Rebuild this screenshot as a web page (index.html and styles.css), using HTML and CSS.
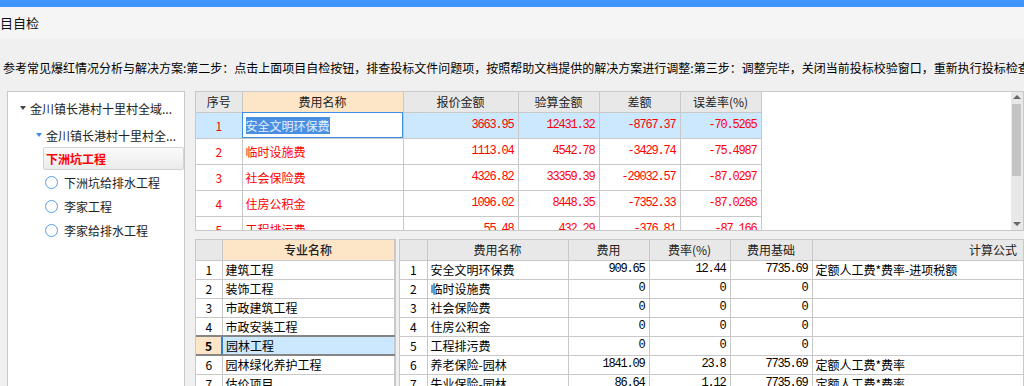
FILE: index.html
```html
<!DOCTYPE html>
<html lang="zh-CN">
  <head>
    <meta charset="UTF-8" />
    <meta name="viewport" content="width=device-width, initial-scale=1.0" />
    <title>项目自检</title>
    <link rel="stylesheet" href="styles.css">
  </head>
  <body>
    <div class="topbar"></div>
    <div class="titlebar">目自检</div>
    <div class="tip">参考常见爆红情况分析与解决方案:第二步：点击上面项目自检按钮，排查投标文件问题项，按照帮助文档提供的解决方案进行调整:第三步：调整完毕，关闭当前投标校验窗口，重新执行投标检查</div>

    <div class="main">
      <div class="tree">
        <div class="node level1"><span class="caret"></span>金川镇长港村十里村全域...</div>
        <div class="node level2"><span class="caret blue"></span>金川镇长港村十里村全...</div>
        <div class="node current">下洲坑工程</div>
        <div class="node leaf"><span class="ring"></span>下洲坑给排水工程</div>
        <div class="node leaf"><span class="ring"></span>李家工程</div>
        <div class="node leaf"><span class="ring"></span>李家给排水工程</div>
      </div>

      <div class="right">
        <div class="upper">
          <div class="grid-wrap">
            <table class="grid check">
              <colgroup>
                <col style="width:46px" /><col style="width:161px" /><col style="width:115px" />
                <col style="width:81px" /><col style="width:81px" /><col style="width:81px" />
              </colgroup>
              <tr>
                <th>序号</th><th class="sorted">费用名称</th><th>报价金额</th>
                <th>验算金额</th><th>差额</th><th>误差率(%)</th>
              </tr>
              <tr class="selected">
                <td class="no">1</td><td class="editing"><span class="hl">安全文明环保费</span></td>
                <td class="num">3663.95</td><td class="num">12431.32</td><td class="num">-8767.37</td><td class="num">-70.5265</td>
              </tr>
              <tr>
                <td class="no">2</td><td>临时设施费</td>
                <td class="num">1113.04</td><td class="num">4542.78</td><td class="num">-3429.74</td><td class="num">-75.4987</td>
              </tr>
              <tr>
                <td class="no">3</td><td>社会保险费</td>
                <td class="num">4326.82</td><td class="num">33359.39</td><td class="num">-29032.57</td><td class="num">-87.0297</td>
              </tr>
              <tr>
                <td class="no">4</td><td>住房公积金</td>
                <td class="num">1096.02</td><td class="num">8448.35</td><td class="num">-7352.33</td><td class="num">-87.0268</td>
              </tr>
              <tr>
                <td class="no">5</td><td>工程排污费</td>
                <td class="num">55.48</td><td class="num">432.29</td><td class="num">-376.81</td><td class="num">-87.166</td>
              </tr>
            </table>
          </div>
          <div class="vscroll">
            <span class="arrow up"></span>
            <span class="thumb"></span>
            <span class="arrow down"></span>
          </div>
        </div>

        <div class="lower">
          <div class="panel majors">
            <table class="grid list">
              <colgroup><col style="width:26px" /><col style="width:172px" /></colgroup>
              <tr><th></th><th class="sorted bold">专业名称</th></tr>
              <tr><td class="no">1</td><td>建筑工程</td></tr>
              <tr><td class="no">2</td><td>装饰工程</td></tr>
              <tr><td class="no">3</td><td>市政建筑工程</td></tr>
              <tr><td class="no">4</td><td>市政安装工程</td></tr>
              <tr class="picked"><td class="no">5</td><td>园林工程</td></tr>
              <tr><td class="no">6</td><td>园林绿化养护工程</td></tr>
              <tr><td class="no">7</td><td>估价项目</td></tr>
            </table>
          </div>
          <div class="panel fees">
            <table class="grid list">
              <colgroup>
                <col style="width:27px" /><col style="width:141px" /><col style="width:81px" />
                <col style="width:81px" /><col style="width:82px" /><col style="width:362px" />
              </colgroup>
              <tr><th></th><th>费用名称</th><th>费用</th><th>费率(%)</th><th>费用基础</th><th>计算公式</th></tr>
              <tr><td class="no">1</td><td>安全文明环保费</td><td class="num">909.65</td><td class="num">12.44</td><td class="num">7735.69</td><td>定额人工费*费率-进项税额</td></tr>
              <tr><td class="no">2</td><td>临时设施费</td><td class="num">0</td><td class="num">0</td><td class="num">0</td><td></td></tr>
              <tr><td class="no">3</td><td>社会保险费</td><td class="num">0</td><td class="num">0</td><td class="num">0</td><td></td></tr>
              <tr><td class="no">4</td><td>住房公积金</td><td class="num">0</td><td class="num">0</td><td class="num">0</td><td></td></tr>
              <tr><td class="no">5</td><td>工程排污费</td><td class="num">0</td><td class="num">0</td><td class="num">0</td><td></td></tr>
              <tr><td class="no">6</td><td>养老保险-园林</td><td class="num">1841.09</td><td class="num">23.8</td><td class="num">7735.69</td><td>定额人工费*费率</td></tr>
              <tr><td class="no">7</td><td>失业保险-园林</td><td class="num">86.64</td><td class="num">1.12</td><td class="num">7735.69</td><td>定额人工费*费率</td></tr>
            </table>
          </div>
        </div>
      </div>
    </div>
  </body>
</html>
```

FILE: styles.css
```css
html,
body {
  margin: 0;
  width: 1024px;
  height: 386px;
  overflow: hidden;
}

body {
  font-family: "Noto Sans CJK SC", sans-serif;
  font-size: 12px;
  color: #000;
  background-color: #f0f0f0;
}

.topbar {
  height: 7px;
  background-color: #3f95fe;
}

.titlebar {
  height: 31px;
  line-height: 31px;
  background-color: #f5f5f5;
  color: #111;
  font-size: 13px;
}

.tip {
  height: 53px;
  box-sizing: border-box;
  padding: 22px 0 0 3px;
  line-height: 16px;
  white-space: nowrap;
  overflow: hidden;
}

.main {
  display: flex;
  gap: 10px;
  padding-left: 7px;
  height: 295px;
}

/* tree on the left */
.tree {
  width: 179px;
  height: 320px;
  box-sizing: border-box;
  border: 1px solid #c8c8c8;
  background-color: #fff;
  padding-top: 4px;
  color: #222;
}

.node {
  display: flex;
  align-items: center;
  height: 24px;
  white-space: nowrap;
}

.level1 {
  padding-left: 12px;
}

.level2 {
  margin-top: 3px;
  padding-left: 28px;
}

.caret {
  width: 0;
  height: 0;
  border-left: 3px solid transparent;
  border-right: 3px solid transparent;
  border-top: 4px solid #444;
  margin-right: 4px;
}

.caret.blue {
  border-top-color: #3d8ee8;
}

.current {
  height: 23px;
  box-sizing: border-box;
  margin-left: 35px;
  margin-right: 0;
  padding-left: 2px;
  border: 1px solid #d4d4d4;
  border-radius: 2px;
  background: linear-gradient(#fbfbfb, #ebebeb);
  color: #f00;
  font-weight: bold;
}

.leaf {
  padding-left: 37px;
}

.ring {
  width: 11px;
  height: 11px;
  border: 1.5px solid #5a9ee8;
  border-radius: 50%;
  margin-right: 6px;
}

/* right side */
.right {
  width: 829px;
  display: flex;
  flex-direction: column;
  gap: 8px;
}

.upper {
  height: 140px;
  box-sizing: border-box;
  border: 1px solid #c8c8c8;
  background-color: #fff;
  display: flex;
}

.grid-wrap {
  flex: 1;
  overflow: hidden;
}

.vscroll {
  width: 12px;
  background-color: #e8e8e8;
  position: relative;
}

.vscroll .thumb {
  position: absolute;
  left: 1px;
  top: 12px;
  width: 9px;
  height: 72px;
  background-color: #c4c4c4;
}

.vscroll .arrow {
  position: absolute;
  left: 2px;
  width: 0;
  height: 0;
  border-left: 4px solid transparent;
  border-right: 4px solid transparent;
}

.vscroll .up {
  top: 3px;
  border-bottom: 4px solid #666;
}

.vscroll .down {
  bottom: 4px;
  border-top: 4px solid #666;
}

.grid {
  border-collapse: collapse;
  table-layout: fixed;
}

.grid th,
.grid td {
  border: 1px solid #c8c8c8;
  padding: 0 3px;
  white-space: nowrap;
  overflow: hidden;
}

.grid tr:first-child th {
  border-top: 0;
}

.grid tr > :first-child {
  border-left: 0;
}

.grid th {
  height: 20px;
  box-sizing: border-box;
  background-color: #e8e8e8;
  font-weight: normal;
  color: #222;
  text-align: center;
}

.grid th.sorted {
  background-color: #fde5c7;
}

.grid th.bold {
  font-weight: 500;
}

.grid .no {
  text-align: center;
}

.grid .num {
  text-align: right;
  font-family: "Liberation Mono", monospace;
  letter-spacing: -1.2px;
  padding-right: 4px;
}

.check {
  width: 565px;
}

.check td {
  height: 26px;
  box-sizing: border-box;
  color: #f00;
}

.check .selected td {
  background-color: #cce8ff;
}

.check .selected td.editing {
  background-color: #fff;
  outline: 1px solid #3d8ee8;
  outline-offset: -1px;
}

.hl {
  background-color: #4a90e2;
  color: #e4efff;
}

.lower {
  display: flex;
  gap: 3px;
  height: 160px;
}

.panel {
  box-sizing: border-box;
  border: 1px solid #c8c8c8;
  border-bottom: 0;
  background-color: #fff;
  overflow: hidden;
}

.majors {
  width: 201px;
}

.fees {
  flex: 1;
}

.list td {
  height: 19px;
  box-sizing: border-box;
  line-height: 17px;
}

.majors .list {
  width: 198px;
}

.fees .list {
  width: 774px;
}

.list .picked td {
  background-color: #cce8ff;
  border-top: 2px solid #858585;
  border-bottom: 2px solid #858585;
}

.list .picked td:first-child {
  background-color: #fde5c7;
  font-weight: bold;
}

.list .picked td:nth-child(2) {
  border-left: 2px solid #2f7fe0;
}
```
